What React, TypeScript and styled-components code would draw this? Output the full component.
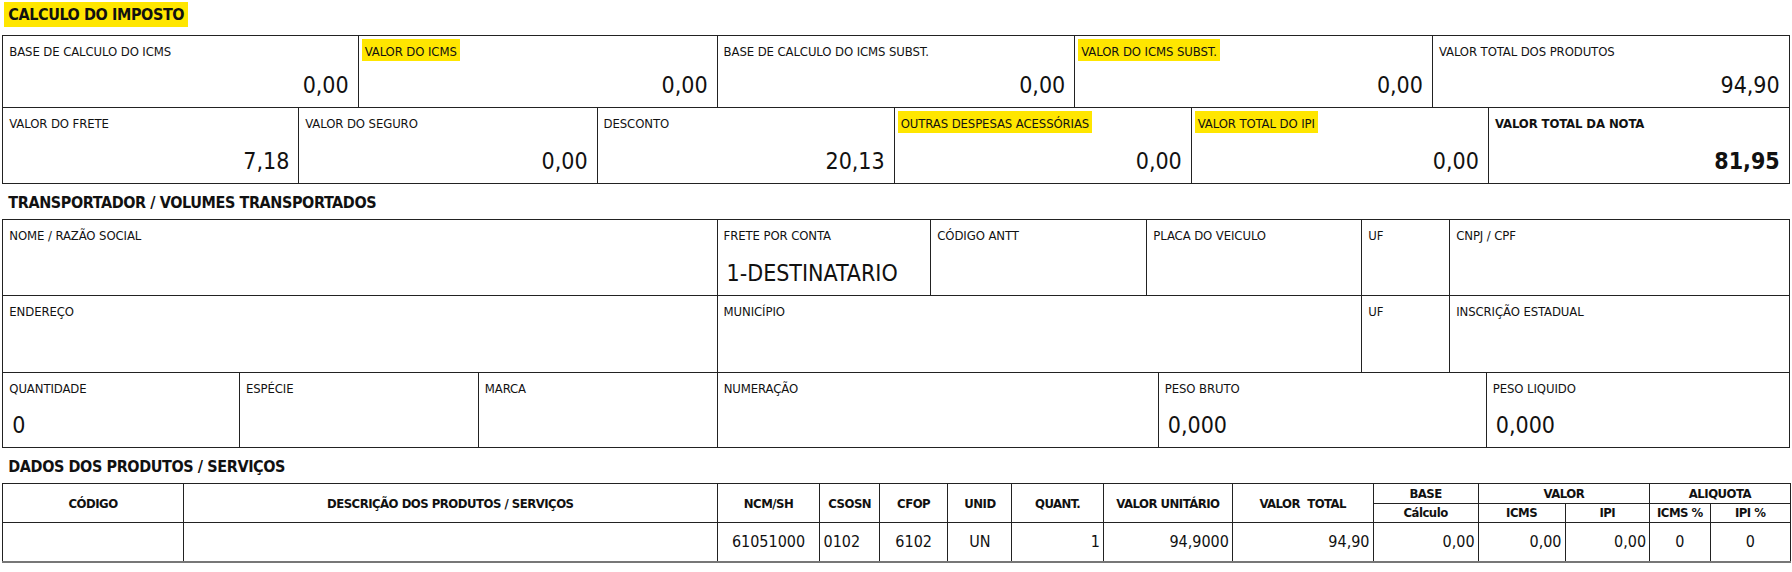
import React from "react";
import styled, { createGlobalStyle } from "styled-components";

const K = 8 / 7;
const s = (v: number) => `${Math.round(v * K * 10) / 10}px`;

const Global = createGlobalStyle`
  html, body { margin: 0; padding: 0; background: #fff; }
  body { font-family: "DejaVu Sans Condensed", "DejaVu Sans", sans-serif; color: #111; }
`;

const Page = styled.div`
  width: ${s(1564)};
  padding: ${s(2)} ${s(2)} 0 ${s(2)};
`;

const Title = styled.div`
  display: inline-block;
  font-weight: bold;
  font-size: 16px;
  letter-spacing: -0.4px;
  padding: 3px 4px;
  margin: 0 0 8px 2px;
  background: #ffe600;
`;

const SectionTitle = styled.div`
  font-weight: bold;
  font-size: 16px;
  letter-spacing: -0.4px;
  padding: 9px 6px 7px;
`;

const Grid = styled.div`
  border-top: 1.5px solid #222;
  border-left: 1.5px solid #222;
`;

const Row = styled.div<{ $cols: string; $h: number }>`
  display: grid;
  grid-template-columns: ${p => p.$cols};
  height: ${p => s(p.$h)};
`;

const Cell = styled.div`
  border-right: 1.5px solid #222;
  border-bottom: 1.5px solid #222;
  padding: 7px 7px 8px 6px;
  display: flex;
  flex-direction: column;
  justify-content: space-between;
  box-sizing: border-box;
  min-width: 0;
`;

const Label = styled.span<{ $hl?: boolean; $bold?: boolean }>`
  align-self: flex-start;
  font-size: 13px;
  letter-spacing: -0.1px;
  line-height: 18px;
  padding: ${p => (p.$hl ? "4px 3px 0 3px" : "0 3px 0 0")};
  margin: ${p => (p.$hl ? "-4px 0 0 -3px" : "0")};
  background: ${p => (p.$hl ? "#ffe600" : "transparent")};
  font-weight: ${p => (p.$bold ? "bold" : "normal")};
`;

const Value = styled.span<{ $bold?: boolean; $left?: boolean }>`
  font-size: 23px;
  text-align: ${p => (p.$left ? "left" : "right")};
  font-weight: ${p => (p.$bold ? "bold" : "normal")};
  line-height: 27px;
  padding: 0 2px 0 3px;
`;

const Table = styled.table`
  border-collapse: collapse;
  table-layout: fixed;
  width: ${s(1564)};
  border-bottom: 2px solid #777;
`;

const Th = styled.th`
  border: 1.5px solid #222;
  font-size: 13px;
  font-weight: bold;
  letter-spacing: -0.5px;
  padding: 0 2px;
  height: ${s(16)};
  text-align: center;
  white-space: nowrap;
`;

const Td = styled.td<{ $align?: string }>`
  border-left: 1.5px solid #222;
  border-right: 1.5px solid #222;
  font-size: 16px;
  height: ${s(33)};
  padding: 0 3px;
  text-align: ${p => p.$align || "right"};
  white-space: nowrap;
`;

type C = { l: string; v?: string; hl?: boolean; bold?: boolean; left?: boolean };

const Box = ({ c }: { c: C }) => (
  <Cell>
    <Label $hl={c.hl} $bold={c.bold}>{c.l}</Label>
    <Value $bold={c.bold} $left={c.left}>{c.v ?? "\u00a0"}</Value>
  </Cell>
);

const cols = (ws: number[]) => ws.map(w => s(w)).join(" ") + " 1fr";

const r1: C[] = [
  { l: "BASE DE CALCULO DO ICMS", v: "0,00" },
  { l: "VALOR DO ICMS", v: "0,00", hl: true },
  { l: "BASE DE CALCULO DO ICMS SUBST.", v: "0,00" },
  { l: "VALOR DO ICMS SUBST.", v: "0,00", hl: true },
  { l: "VALOR TOTAL DOS PRODUTOS", v: "94,90" },
];
const r2: C[] = [
  { l: "VALOR DO FRETE", v: "7,18" },
  { l: "VALOR DO SEGURO", v: "0,00" },
  { l: "DESCONTO", v: "20,13" },
  { l: "OUTRAS DESPESAS ACESSÓRIAS", v: "0,00", hl: true },
  { l: "VALOR TOTAL DO IPI", v: "0,00", hl: true },
  { l: "VALOR TOTAL DA NOTA", v: "81,95", bold: true },
];
const t1: C[] = [
  { l: "NOME / RAZÃO SOCIAL" },
  { l: "FRETE POR CONTA", v: "1-DESTINATARIO", left: true },
  { l: "CÓDIGO ANTT" },
  { l: "PLACA DO VEICULO" },
  { l: "UF" },
  { l: "CNPJ / CPF" },
];
const t2: C[] = [
  { l: "ENDEREÇO" },
  { l: "MUNICÍPIO" },
  { l: "UF" },
  { l: "INSCRIÇÃO ESTADUAL" },
];
const t3: C[] = [
  { l: "QUANTIDADE", v: "0", left: true },
  { l: "ESPÉCIE" },
  { l: "MARCA" },
  { l: "NUMERAÇÃO" },
  { l: "PESO BRUTO", v: "0,000", left: true },
  { l: "PESO LIQUIDO", v: "0,000", left: true },
];

const widths = [158, 467, 90, 52, 60, 56, 80, 113, 123, 92, 76, 74, 53, 70];

export default function App() {
  return (
    <Page>
      <Global />
      <Title>CALCULO DO IMPOSTO</Title>
      <Grid>
        <Row $cols={cols([311, 314, 313, 313])} $h={63}>
          {r1.map((c, i) => <Box key={i} c={c} />)}
        </Row>
        <Row $cols={cols([259, 261, 260, 260, 260])} $h={66}>
          {r2.map((c, i) => <Box key={i} c={c} />)}
        </Row>
      </Grid>
      <SectionTitle>TRANSPORTADOR / VOLUMES TRANSPORTADOS</SectionTitle>
      <Grid>
        <Row $cols={cols([625, 187, 189, 188, 77])} $h={67}>
          {t1.map((c, i) => <Box key={i} c={c} />)}
        </Row>
        <Row $cols={cols([625, 564, 77])} $h={67}>
          {t2.map((c, i) => <Box key={i} c={c} />)}
        </Row>
        <Row $cols={cols([207, 209, 209, 386, 287])} $h={66}>
          {t3.map((c, i) => <Box key={i} c={c} />)}
        </Row>
      </Grid>
      <SectionTitle>DADOS DOS PRODUTOS / SERVIÇOS</SectionTitle>
      <Table>
        <colgroup>
          {widths.map((w, i) => <col key={i} style={{ width: s(w) }} />)}
        </colgroup>
        <thead>
          <tr>
            <Th rowSpan={2}>CÓDIGO</Th>
            <Th rowSpan={2}>DESCRIÇÃO DOS PRODUTOS / SERVIÇOS</Th>
            <Th rowSpan={2}>NCM/SH</Th>
            <Th rowSpan={2}>CSOSN</Th>
            <Th rowSpan={2}>CFOP</Th>
            <Th rowSpan={2}>UNID</Th>
            <Th rowSpan={2}>QUANT.</Th>
            <Th rowSpan={2}>VALOR UNITÁRIO</Th>
            <Th rowSpan={2}>VALOR&nbsp; TOTAL</Th>
            <Th>BASE</Th>
            <Th colSpan={2}>VALOR</Th>
            <Th colSpan={2}>ALIQUOTA</Th>
          </tr>
          <tr>
            <Th>Cálculo</Th>
            <Th>ICMS</Th>
            <Th>IPI</Th>
            <Th>ICMS %</Th>
            <Th>IPI %</Th>
          </tr>
        </thead>
        <tbody>
          <tr>
            <Td></Td>
            <Td></Td>
            <Td $align="center">61051000</Td>
            <Td $align="left">0102</Td>
            <Td $align="center">6102</Td>
            <Td $align="center">UN</Td>
            <Td>1</Td>
            <Td>94,9000</Td>
            <Td>94,90</Td>
            <Td>0,00</Td>
            <Td>0,00</Td>
            <Td>0,00</Td>
            <Td $align="center">0</Td>
            <Td $align="center">0</Td>
          </tr>
        </tbody>
      </Table>
    </Page>
  );
}
